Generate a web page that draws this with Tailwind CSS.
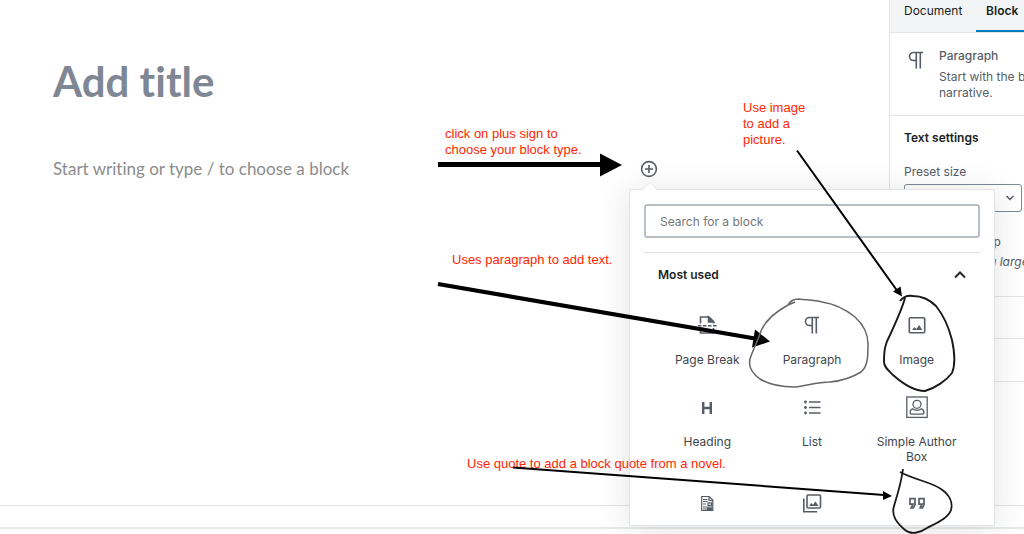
<!DOCTYPE html>
<html lang="en">
<head>
    <meta charset="UTF-8">
    <meta name="viewport" content="width=device-width, initial-scale=1.0">
    <title>Add New Post</title>
    <script src="https://cdn.jsdelivr.net/npm/@tailwindcss/browser@4"></script>
</head>
<body class="bg-white font-[Inter,sans-serif] text-[12px] text-[#555d66]">

  <div class="relative flex h-screen flex-col overflow-hidden">

    <div class="flex min-h-0 flex-1 border-b border-[#e2e4e7]">

      <!-- editor -->
      <main class="min-w-0 flex-1 pl-[53px] pr-[231px] pt-[53px]">
        <input type="text" aria-label="Add title" placeholder="Add title" class="block h-14 w-full font-[Lato,sans-serif] text-[42px] font-bold outline-none [font-variant-ligatures:none] placeholder:text-[#7e8793]">
        <div class="mt-12 flex h-6 items-center">
          <input type="text" aria-label="Start writing" placeholder="Start writing or type / to choose a block" class="min-w-0 flex-1 font-[Lato,sans-serif] text-[17px] outline-none [font-variant-ligatures:none] placeholder:text-[#8c8c8c]">

          <div class="relative">
            <button type="button" aria-label="Add block" class="block">
              <svg class="size-[18px]" viewBox="0 0 18 18" fill="none" stroke="#555d66" stroke-width="1.6"><circle cx="9" cy="9" r="7.4"/><path d="M9 5v8M5 9h8"/></svg>
            </button>

            <!-- block inserter -->
            <div class="absolute -left-[11px] top-[29px] z-10 h-[337px] w-[366px] border border-[#e2e4e7] bg-white shadow-[0_3px_30px_rgba(25,30,35,0.13)]">
              <svg class="absolute -top-2 left-3 h-2 w-4" viewBox="0 0 16 8"><path d="M0 8l8-7.500 8 7.500z" fill="#fff"/><path d="M0 8l8-7.500 8 7.500" fill="none" stroke="#e2e4e7"/></svg>
              <div class="h-full overflow-hidden px-3.5 pt-3.5">
                <input type="text" aria-label="Search for a block" placeholder="Search for a block" class="block h-[34px] w-full rounded-[3px] border-2 border-[#b9bfc6] px-3.5 text-[12px] outline-none placeholder:text-[#72777c]">
                <button type="button" class="mt-3.5 flex h-11 w-full items-center justify-between border-t border-[#e2e4e7] px-3.5 text-[12px] font-semibold text-[#191e23]">
                  Most used
                  <svg class="size-3" viewBox="0 0 12 12" fill="none" stroke="#23282d" stroke-width="2"><path d="M1 8.500l5-5 5 5"/></svg>
                </button>
                <ul class="mt-[17px] grid grid-cols-3 px-[11px] text-center leading-[15px] text-[#40464d]">
                  <li><button type="button" class="flex h-[82px] w-full flex-col items-center gap-[15px]">
                    <svg class="size-6" viewBox="0 0 24 24" fill="none" stroke="#555d66" stroke-width="1.600"><path d="M5.500 10.500V4h8.500l4.500 4.500v2M5.500 15v5h13v-5M3 12.700h3.500M8 12.700h3.500M13 12.700h3.500M18 12.700h3.500"/><path d="M13.500 4v5h5z" fill="#555d66"/></svg>
                    Page Break</button></li>
                  <li><button type="button" class="flex h-[82px] w-full flex-col items-center gap-[15px]">
                    <svg class="size-6" viewBox="0 0 24 24" fill="none" stroke="#555d66" stroke-width="1.600"><path d="M19 4.500H9.500a4 4 0 0 0 0 8H12M12.300 4v16.500M16.300 4v16.500"/></svg>
                    Paragraph</button></li>
                  <li><button type="button" class="flex h-[82px] w-full flex-col items-center gap-[15px]">
                    <svg class="size-6" viewBox="0 0 24 24" fill="none" stroke="#555d66" stroke-width="1.600"><rect x="4.300" y="4.800" width="15.400" height="15" rx="1"/><path d="M7 17l2.500-3 1.800 2 3-4 3 5z" fill="#555d66" stroke="none"/></svg>
                    Image</button></li>
                  <li><button type="button" class="flex h-24 w-full flex-col items-center gap-[15px]">
                    <svg class="size-6" viewBox="0 0 24 24" fill="none" stroke="#555d66" stroke-width="2.400"><path d="M8.200 7v12M15.800 7v12M8.200 13h7.600"/></svg>
                    Heading</button></li>
                  <li><button type="button" class="flex h-24 w-full flex-col items-center gap-[15px]">
                    <svg class="size-6" viewBox="0 0 24 24" stroke="#555d66" stroke-width="1.600"><path d="M9 7h11.500M9 12.500h11.500M9 18h11.500"/><g fill="#555d66" stroke="none"><circle cx="5.500" cy="7" r="1.400"/><circle cx="5.500" cy="12.500" r="1.400"/><circle cx="5.500" cy="18" r="1.400"/></g></svg>
                    List</button></li>
                  <li><button type="button" class="flex h-24 w-full flex-col items-center gap-[15px] px-2">
                    <svg class="size-6 shrink-0" viewBox="0 0 24 24" fill="none" stroke="#555d66" stroke-width="1.300"><rect x="1.800" y="2" width="20.400" height="20.400"/><circle cx="12" cy="9.300" r="4"/><path d="M7.500 13.800c-1.800.7-2.600 2.300-2.300 4.300q.2 1 1.300 1h11q1.100 0 1.300-1c.3-2-.5-3.600-2.300-4.300-2.500 2-6.500 2-9 0z"/></svg>
                    Simple Author Box</button></li>
                  <li><button type="button" aria-label="File" class="flex w-full justify-center">
                    <svg class="size-6" viewBox="0 0 24 24" fill="none" stroke="#555d66" stroke-width="1.200"><path d="M6.700 5.500h7.500l3.600 3.500v10.500H6.700zM14 5.500v4h4M8 8.500h4.500M8 10.500h4.500M8 13h3M13 11.800h3.500v2.500H13zM8 16h9M8 18h5"/><path d="M12.500 17h4.500v2h-4.500z" fill="#555d66"/></svg></button></li>
                  <li><button type="button" aria-label="Gallery" class="flex w-full justify-center">
                    <svg class="size-6" viewBox="0 0 24 24" fill="none" stroke="#555d66" stroke-width="1.600"><rect x="7" y="4" width="13.500" height="13" rx="1"/><path d="M3.800 7.500v13.200h13.500"/><path d="M9 15l2.300-3 1.600 1.800 2.600-3.300 3 4.500z" fill="#555d66" stroke="none"/></svg></button></li>
                  <li><button type="button" aria-label="Quote" class="flex w-full justify-center">
                    <svg class="size-6" viewBox="0 0 24 24" fill="none" stroke="#555d66" stroke-width="1.700"><path d="M5 7.700h5v6L8.300 17H6.200L8 13.200H5zM14 7.700h5v6L17.300 17h-2.100l1.800-3.800h-3z"/></svg></button></li>
                </ul>
              </div>
            </div>
          </div>
        </div>
      </main>

      <!-- settings sidebar -->
      <aside class="w-[135px] shrink-0 overflow-hidden whitespace-nowrap border-l border-[#e2e4e7]">
        <div class="flex h-[33px] border-b border-[#e2e4e7] bg-[#f3f4f5] text-[#191e23]">
          <button type="button" class="shrink-0 px-3.5 pb-2.5">Document</button>
          <button type="button" class="flex-1 border-b-2 border-[#007cba] pb-2 pl-1 font-semibold">Block</button>
        </div>

        <div class="flex h-[83px] gap-[11px] border-b border-[#e2e4e7] pl-3.5 pt-[15px]">
          <svg class="size-6 shrink-0" viewBox="0 0 24 24" fill="none" stroke="#555d66" stroke-width="1.600"><path d="M19 4.500H9.500a4 4 0 0 0 0 8H12M12.300 4v16.500M16.300 4v16.500"/></svg>
          <div class="leading-4">
            <h2 class="mb-[5px] font-medium">Paragraph</h2>
            <p>Start with the building<br>narrative.</p>
          </div>
        </div>

        <div class="h-[181px] border-b border-[#e2e4e7] pl-3.5 pt-3.5 leading-4">
          <h2 class="font-semibold text-[#191e23]">Text settings</h2>
          <label for="preset" class="mt-[18px] block">Preset size</label>
          <div class="relative mt-1 w-[118px]">
            <select id="preset" class="block h-7 w-full appearance-none rounded-[3px] border border-[#7e8993] bg-white"><option></option></select>
            <svg class="pointer-events-none absolute right-2 top-2.5 size-2" viewBox="0 0 8 8" fill="none" stroke="#555d66" stroke-width="1.500"><path d="M.5 2l3.500 3.500L7.500 2"/></svg>
          </div>
          <p class="mt-[22px] pl-[43px]">Drop Cap</p>
          <p class="mt-1 pl-[50px] italic">Show a large initial letter.</p>
        </div>
        <div class="h-[42px] border-b border-[#e2e4e7]"></div>
        <div class="h-[43px] border-b border-[#e2e4e7]"></div>
      </aside>
    </div>
    <div class="mb-[5px] h-[23px] border-b-2 border-[#e8eaed]"></div>

    <!-- hand drawn notes -->
    <div class="pointer-events-none absolute inset-0 z-20 font-['Liberation_Sans',sans-serif] text-[13px] leading-4 text-[#ff2600]">
      <p class="absolute left-[445px] top-[126px]">click on plus sign to<br>choose your block type.</p>
      <p class="absolute left-[743px] top-[100px]">Use image<br>to add a<br>picture.</p>
      <p class="absolute left-[452px] top-[252px]">Uses paragraph to add text.</p>
      <p class="absolute left-[467px] top-[456px]">Use quote to add a block quote from a novel.</p>
      <svg class="absolute left-0 top-0 h-[534px] w-[1024px]" viewBox="0 0 1024 534" fill="none" stroke="#000">
        <path d="M438 164.500h163" stroke-width="5"/>
        <path d="M438 284l317 54.500" stroke-width="4.200"/>
        <path d="M797 150.500l100 140" stroke-width="2"/>
        <path d="M513 467.500l371 27.500" stroke-width="2"/>
        <g fill="#000" stroke="none">
          <path d="M600 153.500l22 11.500-22 11.500z"/>
          <path d="M755 329.500l15 12-18 6z"/>
          <path d="M893 291.500l7.500-5 1.500 10z"/>
          <path d="M883 491l9 5-9 4z"/>
        </g>
        <path d="M788 305C790 301 794 299 799 299C806 300 814 300 822 302C836 304 845 309 855 317C865 326 868 334 868 344C868 356 868 366 861 372C853 377 840 381 830 382C817 382 806 386 795 387C780 387 768 384 760 379C753 374 748 367 750 359C753 349 758 341 761 331C766 319 777 311 788 305L795 302" stroke="#666" stroke-width="1.500"/>
        <path d="M900 301C903 297 907 295 913 296C922 296 930 300 936 306C944 316 949 328 952 340C955 354 955 366 952 373C946 381 935 388 925 391C913 391 902 383 893 375C888 370 884 367 884 362C884 350 885 344 890 335C896 322 902 309 905 298" stroke="#181818" stroke-width="1.900"/>
        <path d="M900 472C915 480 931 482 941 489C950 495 953 503 951 510C948 519 934 524 927 528C920 533 911 535 905 530C897 523 891 516 894 506C898 493 901 484 903 469" stroke="#181818" stroke-width="1.800"/>
      </svg>
    </div>

  </div>
</body>
</html>
